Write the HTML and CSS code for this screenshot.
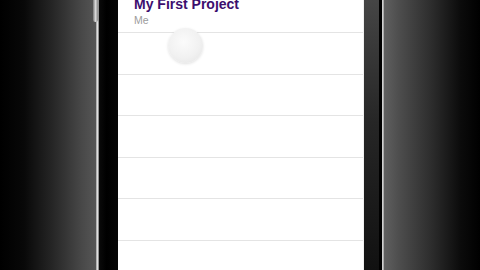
FILE: index.html
```html
<!DOCTYPE html>
<html>
<head>
<meta charset="utf-8">
<link rel="stylesheet" href="styles.css">
</head>
<body>
<div class="stage">
  <div class="bg-left"><div class="vol-btn"></div></div>
  <div class="edge-left"></div>
  <div class="bezel-left"></div>
  <div class="screen">
    <div class="row head">
      <div class="title">My First Project</div>
      <div class="sub">Me</div>
    </div>
    <div class="row"></div>
    <div class="row"></div>
    <div class="row"></div>
    <div class="row"></div>
    <div class="row"></div>
    <div class="row"></div>
    <div class="touch"></div>
  </div>
  <div class="bezel-right"></div>
  <div class="gap-right"></div>
  <div class="edge-right"></div>
  <div class="bg-right"></div>
</div>
</body>
</html>
```
FILE: styles.css
```css
html, body {
  margin: 0;
  padding: 0;
  background: #000;
}
.stage {
  width: 480px;
  height: 270px;
  display: flex;
  overflow: hidden;
}
.bg-left {
  width: 96px;
  position: relative;
  background: linear-gradient(to right, #000 0%, #080808 25%, #262626 55%, #484848 85%, #565656 100%);
}
.vol-btn {
  position: absolute;
  right: -2px;
  top: -4px;
  width: 5px;
  height: 26px;
  border-radius: 3px;
  background: linear-gradient(to right, #777, #d8d8d8, #888);
}
.edge-left {
  width: 3px;
  background: linear-gradient(to right, #9a9a9a, #e0e0e0, #6a6a6a);
}
.bezel-left {
  width: 19px;
  background: linear-gradient(to right, #0a0a0a, #000 40%, #050505);
}
.screen {
  width: 245px;
  background: #fff;
  position: relative;
  display: flex;
  flex-direction: column;
  font-family: "Liberation Sans", Arial, sans-serif;
}
.row {
  box-sizing: border-box;
  flex: 0 0 41.6px;
  border-bottom: 1px solid #e4e4e4;
}
.row.head {
  flex: 0 0 33px;
  padding-left: 16px;
  display: flex;
  flex-direction: column;
}
.title {
  margin-top: -3px;
  font-size: 14px;
  line-height: 15px;
  font-weight: bold;
  color: #3c0e6e;
}
.sub {
  margin-top: 2px;
  font-size: 10.5px;
  line-height: 13px;
  color: #9c9c9c;
}
.touch {
  position: absolute;
  left: 50px;
  top: 28px;
  width: 35px;
  height: 35px;
  border-radius: 50%;
  background: radial-gradient(circle at 45% 40%, #fbfbfb 0%, #f1f1f1 55%, #e2e2e2 100%);
  box-shadow: 0 1px 3px rgba(0,0,0,0.12);
}
.bezel-right {
  width: 16px;
  background: linear-gradient(to bottom, #454545 0%, #262626 45%, #111 100%);
  border-left: 1px solid #f0f0f0;
  box-sizing: border-box;
}
.gap-right {
  width: 3px;
  background: #000;
}
.edge-right {
  width: 2px;
  background: linear-gradient(to right, #e0e0e0, #9a9a9a);
}
.bg-right {
  width: 96px;
  background: linear-gradient(to left, #000 0%, #0b0b0b 20%, #2c2c2c 50%, #4e4e4e 85%, #606060 100%);
}
```
